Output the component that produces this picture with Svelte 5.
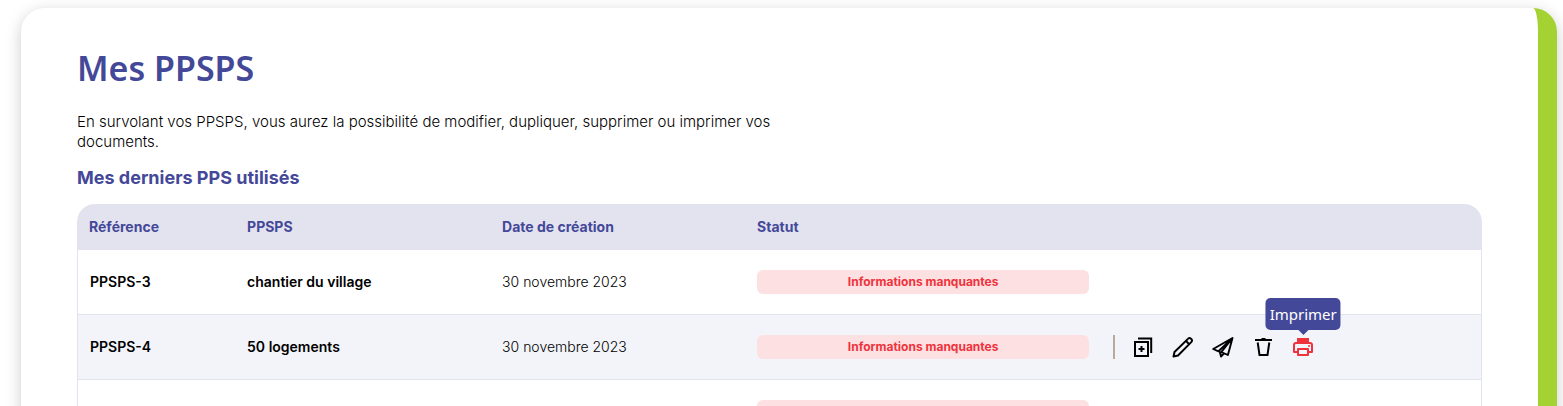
<script lang="ts">
  type Row = { ref: string; name: string; created: string; status: string };

  const rows: Row[] = [
    { ref: 'PPSPS-3', name: 'chantier du village', created: '30 novembre 2023', status: 'Informations manquantes' },
    { ref: 'PPSPS-4', name: '50 logements', created: '30 novembre 2023', status: 'Informations manquantes' },
    { ref: '', name: '', created: '', status: '' },
  ];
  const actions = ['Dupliquer', 'Modifier', 'Envoyer', 'Supprimer', 'Imprimer'];

  // row and action currently pointed at
  let activeRow = $state('PPSPS-4');
  let activeAction = $state('Imprimer');

  function enterRow(ref: string) {
    if (!ref || ref === activeRow) return;
    activeRow = ref;
    activeAction = '';
  }
</script>

{#snippet icon(name: string)}
  <svg viewBox="0 0 24 24" width="24" height="24" fill="none" stroke="currentColor" stroke-width="2" aria-hidden="true">
    {#if name === 'Dupliquer'}
      <path d="M4 7h13v14H4z" />
      <path d="M7 3.5h13.2V18" />
      <path d="M10.5 11v6M7.5 14h6" />
    {:else if name === 'Modifier'}
      <path d="M2.5 21.5 3.5 17 17.2 3.6a1.8 1.8 0 0 1 2.6 0l.7.7a1.8 1.8 0 0 1 0 2.6L7 20.5z" stroke-linejoin="round" />
      <path d="m15 6 3.5 3.5" />
    {:else if name === 'Envoyer'}
      <path d="M21.5 3 2.2 14l5.3 2.3L21.5 3l-4.6 17-6.6-2.8L21.5 3M8.7 16.5l1.3 5 2.8-3" stroke-width="1.9" stroke-linejoin="round" />
    {:else if name === 'Supprimer'}
      <path d="M4 5h17M10.5 4h4" />
      <path d="m6.7 7.5 1.8 12.5h8l1.8-12.5" />
    {:else}
      <path d="M6 3h12v4H6z" fill="currentColor" stroke="none" />
      <path d="M7 17H3v-7a2 2 0 0 1 2-2h14a2 2 0 0 1 2 2v7h-4" stroke-linejoin="round" />
      <path d="M7 14h10v6H7z" stroke-linejoin="round" />
      <circle cx="18" cy="11" r="1" fill="currentColor" stroke="none" />
    {/if}
  </svg>
{/snippet}

<main class="card">
  <h1>Mes PPSPS</h1>
  <p class="intro">
    En survolant vos PPSPS, vous aurez la possibilité de modifier, dupliquer, supprimer ou imprimer vos documents.
  </p>
  <h2>Mes derniers PPS utilisés</h2>

  <table>
    <colgroup>
      <col class="c-ref" />
      <col class="c-name" />
      <col class="c-date" />
      <col class="c-status" />
      <col />
    </colgroup>
    <thead>
      <tr>
        <th scope="col">Référence</th>
        <th scope="col">PPSPS</th>
        <th scope="col">Date de création</th>
        <th scope="col">Statut</th>
        <td></td>
      </tr>
    </thead>
    <tbody>
      {#each rows as row, i (i)}
        <tr class:active={row.ref === activeRow} onmouseenter={() => enterRow(row.ref)}>
          <td class="strong">{row.ref}</td>
          <td class="strong">{row.name}</td>
          <td class="date">{row.created}</td>
          <td><span class="badge">{row.status}</span></td>
          <td>
            {#if row.ref === activeRow}
              <div class="actions">
                {#each actions as action (action)}
                  <button
                    type="button"
                    class:on={action === activeAction}
                    aria-label={action}
                    onmouseenter={() => (activeAction = action)}
                  >
                    {@render icon(action)}
                    {#if action === activeAction}<span class="tip">{action}</span>{/if}
                  </button>
                {/each}
              </div>
            {/if}
          </td>
        </tr>
      {/each}
    </tbody>
  </table>
</main>

<style>
  :global(body) { background: #fff; overflow: hidden; }

  .card {
    margin: 8px 6px 0 21px;
    padding: 40px 56px;
    background: #fff;
    border-right: 19px solid #a4d233;
    border-radius: 24px;
    box-shadow: 0 4px 16px rgba(0, 0, 0, 0.2);
    color: #000;
    font: 400 14px/20px Inter, sans-serif;
  }

  h1 { margin: 0 0 24px; color: #444899; font: 600 34px/40px "Noto Sans", sans-serif; }
  .intro { max-width: 720px; margin: 0 0 16px; font-size: 15px; font-weight: 300; }
  h2 { margin: 0 0 16px; color: #444899; font-size: 18px; font-weight: 700; line-height: 20px; }

  table { width: 100%; table-layout: fixed; border-collapse: separate; border-spacing: 0; }
  .c-ref { width: 11.25%; }
  .c-name, .c-date { width: 18.15%; }
  .c-status { width: 25.35%; }

  th, td { padding: 0 12px; text-align: left; vertical-align: middle; }
  thead th, thead td { height: 46px; background: #e3e3ef; color: #444899; font-size: 14px; font-weight: 700; }
  thead tr > :first-child { border-top-left-radius: 18px; }
  thead tr > :last-child { border-top-right-radius: 18px; }

  tbody td { height: 64px; border-bottom: 1px solid #e3e3ef; }
  tbody td:first-child { border-left: 1px solid #e3e3ef; }
  tbody td:last-child { border-right: 1px solid #e3e3ef; }
  .active td { background: #f3f4fa; }
  .strong { font-weight: 600; }
  .date { font-weight: 300; }

  .badge {
    display: block;
    min-height: 24px;
    border-radius: 6px;
    background: #fde0e1;
    color: #f0323c;
    font-size: 12px;
    font-weight: 700;
    line-height: 24px;
    text-align: center;
  }

  .actions { display: flex; gap: 16px; padding-left: 16px; border-left: 2px solid #b9a999; }
  .actions button {
    position: relative;
    width: 24px; height: 24px; padding: 0;
    border: 0; background: none; color: #000; cursor: pointer;
  }
  .actions button.on { color: #f0323c; }
  .actions svg { display: block; }

  .tip {
    position: absolute;
    bottom: calc(100% + 5px);
    left: 50%;
    transform: translateX(-50%);
    padding: 0 4px;
    border-radius: 5px;
    background: #444899;
    color: #fff;
    font: 400 15px/32px "Noto Sans", sans-serif;
  }
  .tip::after {
    content: '';
    position: absolute;
    top: 100%;
    left: 50%;
    margin-left: -5px;
    border: 5px solid transparent;
    border-top-color: #444899;
    border-bottom: 0;
  }
</style>
